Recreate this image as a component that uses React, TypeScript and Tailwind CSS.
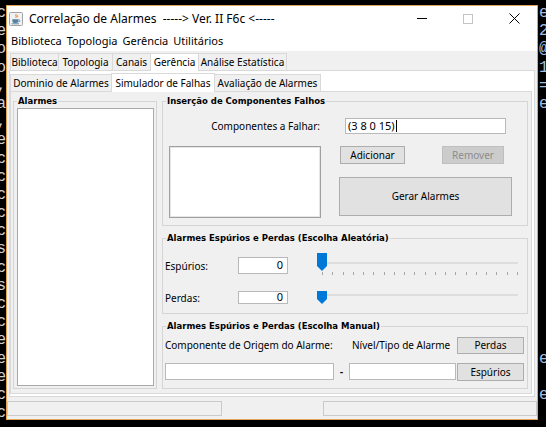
import React from 'react';

const sans = "font-['Noto_Sans',sans-serif]";
const titleFont = "font-['DejaVu_Sans',sans-serif] font-bold text-[8.5px] leading-[10px]";

const leftConsole = ['c', 'e', 'o', 'o', ',', 'a', ',', 'e', 'c', 'c', 'c', 'c', 'c', 's', 'c', 's', 'c', 'c', 'e', 'e', 'e', 'c', 'c'];
const rightConsole = ['e', '2', '@', '1', '=', 'e', '', '', '', '', '', '', '', '', '', '', '', '', '', 'e', '', 'e', ''];

const mainTabs = [
  { label: 'Biblioteca', w: 'w-[49px]' },
  { label: 'Topologia', w: 'w-[55px]' },
  { label: 'Canais', w: 'w-[39px]' },
  { label: 'Gerência', w: 'w-[49px]', selected: true },
  { label: 'Análise Estatística', w: 'w-[89px]' },
];

const subTabs = [
  { label: 'Dominio de Alarmes', w: 'w-[102px]' },
  { label: 'Simulador de Falhas', w: 'w-[104px]', selected: true },
  { label: 'Avaliação de Alarmes', w: 'w-[107px]' },
];

function JavaIcon() {
  return (
    <svg width="14" height="14" viewBox="0 0 14 14">
      <rect x="0.5" y="0.5" width="13" height="13" rx="1" fill="#f2f2f2" stroke="#a3a3a3" />
      <path d="M7.2 2.2c-1.6 1.3 1 2-0.4 3.6M8.6 3c-0.9 0.8 0.6 1.2-0.2 2.2" stroke="#e76f00" strokeWidth="0.9" fill="none" />
      <path d="M3.3 7.3h6v1.6a2 2 0 0 1-2 2h-2a2 2 0 0 1-2-2z" fill="#5382a1" />
      <path d="M9.3 7.8h0.6a1 1 0 0 1 0 2h-0.9" stroke="#5382a1" strokeWidth="0.8" fill="none" />
      <path d="M2.6 11.8h7.4" stroke="#5382a1" strokeWidth="0.9" />
    </svg>
  );
}

function ConsoleColumn({ chars, left }: { chars: string[]; left?: boolean }) {
  return (
    <div
      className={`flex flex-col pt-[4px] overflow-hidden font-['Liberation_Mono',monospace] text-[16px] ${
        left ? 'w-[6px] shrink-0 text-[#cfcfcf]' : 'flex-1 pl-[1px] text-[#9fbfe0]'
      }`}
    >
      {chars.map((c, i) => (
        <div key={i} className={`h-[18.2px] leading-[18.2px] flex ${left ? 'justify-end' : ''}`}>
          {c || '\u00a0'}
        </div>
      ))}
    </div>
  );
}

function Tab({ label, w, selected, tall }: { label: string; w: string; selected?: boolean; tall: string }) {
  return (
    <div
      className={`${w} ${
        selected ? `${tall} bg-white relative z-10 -mb-px` : 'h-[17px] bg-[#f0f0f0]'
      } -ml-px first:ml-0 border border-b-0 border-[#d9d9d9] flex items-center justify-center text-[10px] text-black whitespace-nowrap`}
    >
      {label}
    </div>
  );
}

function Group({ title, className, children }: { title: string; className: string; children: React.ReactNode }) {
  return (
    <fieldset className={`border border-[#d5d5d5] ${className}`}>
      <legend className={`ml-[3px] px-[1px] text-black ${titleFont}`}>{title}</legend>
      {children}
    </fieldset>
  );
}

function Button({ label, className, disabled }: { label: string; className: string; disabled?: boolean }) {
  return (
    <div
      className={`${className} border flex items-center justify-center text-[10px] ${
        disabled ? 'bg-[#cccccc] border-[#bfbfbf] text-[#8c8c8c]' : 'bg-[#e1e1e1] border-[#adadad] text-black'
      }`}
    >
      {label}
    </div>
  );
}

function Field({ className, value, caret }: { className: string; value?: string; caret?: boolean }) {
  return (
    <div className={`${className} bg-white border border-[#b9b9b9] flex items-center text-[11px] text-black`}>
      {value}
      {caret && <span className="w-px h-[12px] bg-black ml-[1px]" />}
    </div>
  );
}

function Slider({ big }: { big?: boolean }) {
  return (
    <div className="w-[201px] flex flex-col">
      <div className={`relative ${big ? 'h-[18px]' : 'h-[13px]'}`}>
        <div className={`absolute left-0 right-0 h-[2px] bg-[#dedede] ${big ? 'top-[9px]' : 'top-[3px]'}`} />
        <svg className="absolute left-0 top-0" width="10" height={big ? 18 : 13} viewBox={big ? '0 0 10 18' : '0 0 10 13'}>
          <path d={big ? 'M0 0H10V13L5 18L0 13Z' : 'M0 0H10V8L5 13L0 8Z'} fill="#0078d7" />
        </svg>
      </div>
      {big && (
        <div className="ml-[5px] mt-[1px] w-[196px] h-[3px] flex justify-between">
          {Array.from({ length: 20 }).map((_, i) => (
            <span key={i} className="w-px h-[3px] bg-[#a5a5a5]" />
          ))}
        </div>
      )}
    </div>
  );
}

export default function App() {
  return (
    <div className={`w-[546px] h-[427px] bg-black overflow-hidden flex ${sans}`}>
      <ConsoleColumn chars={leftConsole} left />

      <div className="w-[532px] h-[415px] mt-[5px] shrink-0 border border-[#e3a457] bg-[#f0f0f0] flex flex-col">
        {/* title bar */}
        <div className="h-[25px] bg-white flex items-center">
          <div className="ml-[2px]">
            <JavaIcon />
          </div>
          <div className="ml-[6px] text-[12px] text-black whitespace-pre">Correlação de Alarmes  -----&gt; Ver. II F6c &lt;-----</div>
          <div className="ml-auto flex h-full">
            <div className="w-[46px] flex items-center justify-center">
              <span className="w-[10px] h-px bg-black" />
            </div>
            <div className="w-[46px] flex items-center justify-center">
              <span className="w-[10px] h-[10px] border border-[#c4c4c4]" />
            </div>
            <div className="w-[46px] flex items-center justify-center">
              <svg width="11" height="11" viewBox="0 0 11 11">
                <path d="M0.5 0.5L10.5 10.5M10.5 0.5L0.5 10.5" stroke="#000" strokeWidth="1" />
              </svg>
            </div>
          </div>
        </div>

        {/* menu bar */}
        <div className="h-[20px] bg-white flex items-center gap-[5px] pl-[4px] text-[11px] text-black">
          <span>Biblioteca</span>
          <span>Topologia</span>
          <span>Gerência</span>
          <span>Utilitários</span>
        </div>

        {/* main tabbed pane */}
        <div className="flex-1 flex flex-col px-[2px] pt-[1px]">
          <div className="h-[18px] flex items-end pl-[1px]">
            {mainTabs.map((t) => (
              <Tab key={t.label} label={t.label} w={t.w} selected={t.selected} tall="h-[18px]" />
            ))}
          </div>

          <div className="flex-1 border border-[#d9d9d9] bg-white flex flex-col pr-[2px] pb-[2px]">
            <div className="h-[20px] flex items-end">
              {subTabs.map((t) => (
                <Tab key={t.label} label={t.label} w={t.w} selected={t.selected} tall="h-[19px]" />
              ))}
            </div>

            <div className="flex-1 border border-[#d9d9d9] bg-[#f0f0f0] flex gap-[5px] px-[2px] pt-[4px] pb-[4px]">
              <Group title="Alarmes" className="w-[144px]">
                <div className="mt-[2px] ml-[3px] mr-[2px] h-[278px] bg-white border border-[#a9a9a9]" />
              </Group>

              <div className="w-[366px] flex flex-col gap-[7px]">
                <Group title="Inserção de Componentes Falhos" className="h-[130px]">
                  <div className="mt-[12px] h-[16px] flex items-center">
                    <div className="ml-[6px] w-[151px] text-right text-[10px] text-black">Componentes a Falhar:</div>
                    <Field className="ml-[25px] w-[161px] h-[16px] pl-[2px]" value="(3 8 0 15)" caret />
                  </div>
                  <div className="mt-[12px] flex">
                    <div className="ml-[6px] w-[152px] h-[72px] bg-white border border-[#a0a0a0] shadow-[inset_0_0_0_1px_#e6e6e6]" />
                    <div className="ml-[18px] flex flex-col">
                      <div className="flex">
                        <Button label="Adicionar" className="ml-[1px] w-[65px] h-[18px]" />
                        <Button label="Remover" className="ml-[37px] w-[62px] h-[18px]" disabled />
                      </div>
                      <Button label="Gerar Alarmes" className="mt-[13px] w-[173px] h-[39px]" />
                    </div>
                  </div>
                </Group>

                <Group title="Alarmes Espúrios e Perdas (Escolha Aleatória)" className="h-[81px]">
                  <div className="mt-[10px] h-[24px] flex items-start">
                    <div className="ml-[2px] w-[73px] mt-[5px] leading-[16px] text-[10px] text-black">Espúrios:</div>
                    <Field className="mt-[4px] w-[50px] h-[17px] justify-end pr-[4px]" value="0" />
                    <div className="ml-[29px]">
                      <Slider big />
                    </div>
                  </div>
                  <div className="mt-[12px] h-[16px] flex items-start">
                    <div className="ml-[2px] w-[73px] mt-[1px] leading-[16px] text-[10px] text-black">Perdas:</div>
                    <Field className="mt-[2px] w-[50px] h-[13px] justify-end pr-[4px]" value="0" />
                    <div className="ml-[29px] mt-[2px]">
                      <Slider />
                    </div>
                  </div>
                </Group>

                <Group title="Alarmes Espúrios e Perdas (Escolha Manual)" className="h-[68px]">
                  <div className="mt-[6px] h-[17px] flex items-center text-[10px] text-black">
                    <div className="ml-[2px] w-[187px]">Componente de Origem do Alarme:</div>
                    <div className="w-[105px]">Nível/Tipo de Alarme</div>
                    <Button label="Perdas" className="w-[67px] h-[17px]" />
                  </div>
                  <div className="mt-[9px] flex items-start">
                    <Field className="ml-[2px] w-[169px] h-[17px]" />
                    <div className={`w-[15px] h-[17px] flex items-center justify-center text-black ${titleFont}`}>-</div>
                    <Field className="w-[107px] h-[17px]" />
                    <Button label="Espúrios" className="ml-[1px] w-[67px] h-[18px]" />
                  </div>
                </Group>
              </div>
            </div>
          </div>
        </div>

        {/* status bar */}
        <div className="h-[22px] flex justify-between items-start pt-[4px]">
          <div className="w-[215px] h-[15px] border border-[#cacaca]" />
          <div className="w-[214px] h-[15px] border border-[#cacaca]" />
        </div>
      </div>

      <ConsoleColumn chars={rightConsole} />
    </div>
  );
}
